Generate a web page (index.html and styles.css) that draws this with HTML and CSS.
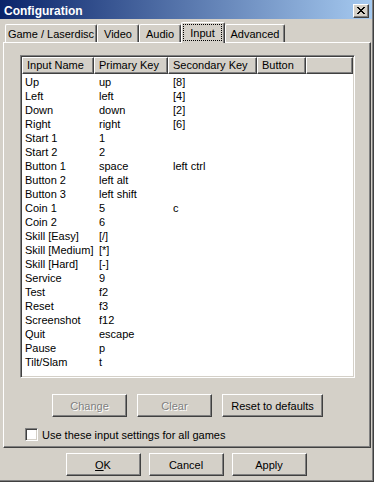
FILE: index.html
```html
<!DOCTYPE html>
<html lang="en">
<head>
    <meta charset="UTF-8">
    <meta name="viewport" content="width=device-width, initial-scale=1.0">
    <title>Configuration</title>
    <link rel="stylesheet" href="styles.css">
</head>
<body>
<div class="window">
  <div class="title-bar">
    <span class="title">Configuration</span>
    <button class="close-button" aria-label="Close">
      <svg width="8" height="7" viewBox="0 0 8 7"><path d="M0 0h2v1H0zM6 0h2v1H6zM1 1h2v1H1zM5 1h2v1H5zM2 2h4v1H2zM3 3h2v1H3zM2 4h4v1H2zM1 5h2v1H1zM5 5h2v1H5zM0 6h2v1H0zM6 6h2v1H6z" fill="#000"/></svg>
    </button>
  </div>

  <div class="tabs">
    <span class="tab tab-game">Game / Laserdisc</span>
    <span class="tab tab-video">Video</span>
    <span class="tab tab-audio">Audio</span>
    <span class="tab tab-input tab-active"><span class="focus-ring">Input</span></span>
    <span class="tab tab-advanced">Advanced</span>
  </div>

  <div class="panel">
    <div class="list">
      <div class="list-head">
        <span class="head-cell">Input Name</span>
        <span class="head-cell">Primary Key</span>
        <span class="head-cell">Secondary Key</span>
        <span class="head-cell">Button</span>
        <span class="head-cell"></span>
      </div>
      <div class="list-body">
        <div class="row"><span>Up</span><span>up</span><span>[8]</span><span></span></div>
        <div class="row"><span>Left</span><span>left</span><span>[4]</span><span></span></div>
        <div class="row"><span>Down</span><span>down</span><span>[2]</span><span></span></div>
        <div class="row"><span>Right</span><span>right</span><span>[6]</span><span></span></div>
        <div class="row"><span>Start 1</span><span>1</span><span></span><span></span></div>
        <div class="row"><span>Start 2</span><span>2</span><span></span><span></span></div>
        <div class="row"><span>Button 1</span><span>space</span><span>left ctrl</span><span></span></div>
        <div class="row"><span>Button 2</span><span>left alt</span><span></span><span></span></div>
        <div class="row"><span>Button 3</span><span>left shift</span><span></span><span></span></div>
        <div class="row"><span>Coin 1</span><span>5</span><span>c</span><span></span></div>
        <div class="row"><span>Coin 2</span><span>6</span><span></span><span></span></div>
        <div class="row"><span>Skill [Easy]</span><span>[/]</span><span></span><span></span></div>
        <div class="row"><span>Skill [Medium]</span><span>[*]</span><span></span><span></span></div>
        <div class="row"><span>Skill [Hard]</span><span>[-]</span><span></span><span></span></div>
        <div class="row"><span>Service</span><span>9</span><span></span><span></span></div>
        <div class="row"><span>Test</span><span>f2</span><span></span><span></span></div>
        <div class="row"><span>Reset</span><span>f3</span><span></span><span></span></div>
        <div class="row"><span>Screenshot</span><span>f12</span><span></span><span></span></div>
        <div class="row"><span>Quit</span><span>escape</span><span></span><span></span></div>
        <div class="row"><span>Pause</span><span>p</span><span></span><span></span></div>
        <div class="row"><span>Tilt/Slam</span><span>t</span><span></span><span></span></div>
      </div>
    </div>

    <div class="list-buttons">
      <button class="button" disabled>Change</button>
      <button class="button" disabled>Clear</button>
      <button class="button button-wide">Reset to defaults</button>
    </div>

    <label class="check-row">
      <span class="checkbox"></span>
      Use these input settings for all games
    </label>
  </div>

  <div class="footer">
    <button class="button"><u>O</u>K</button>
    <button class="button">Cancel</button>
    <button class="button">Apply</button>
  </div>
</div>
</body>
</html>
```

FILE: styles.css
```css
body {
    margin: 0;
    background-color: #d4d0c8;
    font-family: "Liberation Sans", Arial, sans-serif;
    font-size: 11px;
    color: #000;
}
.window {
    width: 374px;
    height: 482px;
    box-sizing: border-box;
    border-right: 1px solid #404040;
    border-bottom: 1px solid #404040;
    box-shadow: inset -1px -1px #808080;
    padding: 0 1px 1px 0;
    display: flex;
    flex-direction: column;
}

/* title bar */
.title-bar {
    height: 19px;
    box-sizing: border-box;
    display: flex;
    align-items: center;
    justify-content: space-between;
    padding: 2px 3px 0 4px;
    background: linear-gradient(to right, #0a246a, #a6caf0);
}
.title {
    color: #fff;
    font-weight: bold;
    font-size: 12px;
}
.close-button {
    width: 16px;
    height: 14px;
    padding: 0;
    box-sizing: border-box;
    background-color: #d4d0c8;
    border: 1px solid;
    border-color: #fff #404040 #404040 #fff;
    box-shadow: inset -1px -1px #808080;
    display: flex;
    align-items: center;
    justify-content: center;
}
.close-button svg {
    display: block;
}

/* tabs */
.tabs {
    display: flex;
    align-items: flex-end;
    height: 20px;
    margin: 3px 0 0 5px;
}
.tab {
    height: 18px;
    box-sizing: border-box;
    border-top: 1px solid #fff;
    border-left: 1px solid #fff;
    border-right: 1px solid #404040;
    border-radius: 2px 2px 0 0;
    box-shadow: inset -1px 0 #808080;
    display: flex;
    align-items: center;
    justify-content: center;
    padding-top: 1px;
}
.tab-game { width: 92px; }
.tab-video { width: 42px; }
.tab-audio { width: 42px; }
.tab-input { width: 44px; }
.tab-advanced { width: 60px; }
.tab-active {
    height: 21px;
    margin-bottom: -1px;
    position: relative;
    z-index: 1;
    background-color: #d4d0c8;
    align-items: flex-start;
    padding: 1px 2px 0 1px;
}
.focus-ring {
    flex: 1;
    height: 17px;
    box-sizing: border-box;
    border: 1px dotted #000;
    display: flex;
    align-items: center;
    justify-content: center;
}

/* tab page */
.panel {
    height: 406px;
    margin: 0 1px 0 3px;
    box-sizing: border-box;
    border: 1px solid;
    border-color: #fff #404040 #404040 #fff;
    box-shadow: inset -1px -1px #808080;
    padding: 12px 15px 0 16px;
    display: flex;
    flex-direction: column;
}
.list {
    height: 323px;
    box-sizing: border-box;
    background-color: #fff;
    border: 1px solid;
    border-color: #808080 #fff #fff #808080;
    box-shadow: inset 1px 1px #404040, inset -1px -1px #d4d0c8;
    padding: 1px;
}
.list-head {
    display: grid;
    grid-template-columns: 72px 74px 89px 49px 1fr;
    height: 17px;
}
.head-cell {
    box-sizing: border-box;
    background-color: #d4d0c8;
    border: 1px solid;
    border-color: #fff #404040 #404040 #fff;
    box-shadow: inset -1px -1px #808080;
    padding-left: 4px;
    line-height: 14px;
    white-space: nowrap;
    overflow: hidden;
}
.list-body {
    padding-top: 1px;
}
.row {
    display: grid;
    grid-template-columns: 72px 74px 89px 1fr;
    height: 14px;
    line-height: 14px;
    white-space: nowrap;
}
.row span {
    padding-left: 5px;
}
.row span:first-child {
    padding-left: 3px;
}

/* buttons */
.button {
    width: 75px;
    height: 23px;
    padding: 0;
    box-sizing: border-box;
    font: inherit;
    color: #000;
    background-color: #d4d0c8;
    border: 1px solid;
    border-color: #fff #404040 #404040 #fff;
    box-shadow: inset -1px -1px #808080;
}
.button:disabled {
    color: #808080;
    text-shadow: 1px 1px #fff;
}
.button-wide {
    width: 101px;
}
.list-buttons {
    display: flex;
    justify-content: center;
    gap: 10px;
    margin-top: 16px;
}
.check-row {
    display: flex;
    align-items: center;
    gap: 4px;
    margin: 11px 0 0 5px;
    height: 13px;
}
.checkbox {
    width: 13px;
    height: 13px;
    box-sizing: border-box;
    background-color: #fff;
    border: 1px solid;
    border-color: #808080 #fff #fff #808080;
    box-shadow: inset 1px 1px #404040, inset -1px -1px #d4d0c8;
}
.footer {
    display: flex;
    justify-content: center;
    gap: 8px;
    margin-top: 5px;
}
```
